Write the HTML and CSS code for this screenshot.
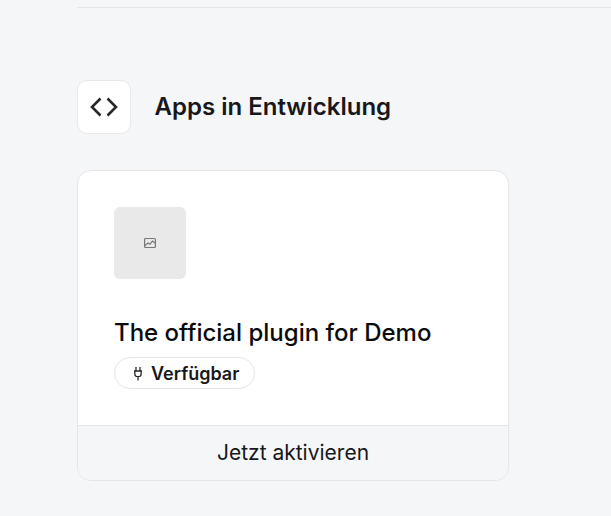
FILE: index.html
```html
<!DOCTYPE html>
<html>
  <head>
    <meta http-equiv="Content-Type" content="text/html;charset=utf-8" />
    <title>Apps in Entwicklung</title>
    <link rel="stylesheet" href="styles.css">
  </head>

  <body>
    <main class="content">
      <hr class="divider" />

      <!-- Section header -->
      <div class="section-head">
        <div class="section-icon">
          <svg width="30" height="30" viewBox="0 0 30 30" fill="none" stroke="#27272a" stroke-width="2.6">
            <path d="M11.5 6.5 3 15l8.5 8.5" />
            <path d="M18.5 6.5 27 15l-8.5 8.5" />
          </svg>
        </div>
        <h2 class="section-title">Apps in Entwicklung</h2>
      </div>

      <!-- App card -->
      <div class="app-card">
        <div class="app-body">
          <div class="app-thumb">
            <svg width="12" height="12" viewBox="0 0 12 12" fill="none" stroke="#777" stroke-width="1.2">
              <rect x="0.6" y="1.5" width="10.8" height="9" rx="1" />
              <path d="M1 8.5 4 6l2 1.2L8.5 4 11 6" />
            </svg>
          </div>
          <h3 class="app-name">The official plugin for Demo</h3>
          <span class="status-pill">
            <svg width="12" height="15" viewBox="0 0 12 15" fill="none" stroke="#27272a" stroke-width="1.3">
              <path d="M4 1v4M8 1v4M2 5h8M2.8 5v2.5a3.2 3.2 0 0 0 6.4 0V5M6 10.7V14.5" />
            </svg>
            Verfügbar
          </span>
        </div>
        <div class="app-footer">Jetzt aktivieren</div>
      </div>
    </main>
  </body>
</html>
```

FILE: styles.css
```css
html,
body {
  height: 100%;
}

body {
  background-color: #f5f6f8;
  color: #18181b;
  font-family: Inter, "Liberation Sans", sans-serif;
  margin: 0;
  overflow: hidden;
}

.content {
  padding-left: 77px;
}

.divider {
  border: 0;
  border-top: 1px solid #e4e5e8;
  margin: 7px 0 0;
}

.section-head {
  display: flex;
  align-items: center;
  gap: 23.6px;
  margin-top: 72px;
}

.section-icon {
  display: flex;
  align-items: center;
  justify-content: center;
  box-sizing: border-box;
  width: 54px;
  height: 54px;
  background-color: #fff;
  border: 1px solid #e7e8ea;
  border-radius: 10px;
}

.section-title {
  margin: 0;
  font-size: 24px;
  font-weight: 600;
  line-height: 32px;
}

.app-card {
  box-sizing: border-box;
  width: 432px;
  height: 311px;
  margin-top: 36px;
  background-color: #fff;
  border: 1px solid #e4e5e8;
  border-radius: 14px;
  overflow: hidden;
  display: flex;
  flex-direction: column;
}

.app-body {
  flex: 1;
  padding: 36px 36px 0;
}

.app-thumb {
  display: flex;
  align-items: center;
  justify-content: center;
  width: 72px;
  height: 72px;
  background-color: #e9e9e9;
  border-radius: 6px;
}

.app-name {
  margin: 39px 0 0;
  font-size: 24px;
  font-weight: 500;
  line-height: 30px;
  color: #0b0b0c;
}

.status-pill {
  display: inline-flex;
  align-items: center;
  gap: 7px;
  box-sizing: border-box;
  height: 32px;
  margin-top: 9px;
  padding: 0 15px 0 17px;
  background-color: #fff;
  border: 1px solid #e4e5e8;
  border-radius: 16px;
  font-size: 18px;
  font-weight: 600;
}

.app-footer {
  height: 54px;
  line-height: 53px;
  text-align: center;
  background-color: #f5f6f8;
  border-top: 1px solid #e4e5e8;
  font-size: 21px;
  color: #18181b;
}
```
